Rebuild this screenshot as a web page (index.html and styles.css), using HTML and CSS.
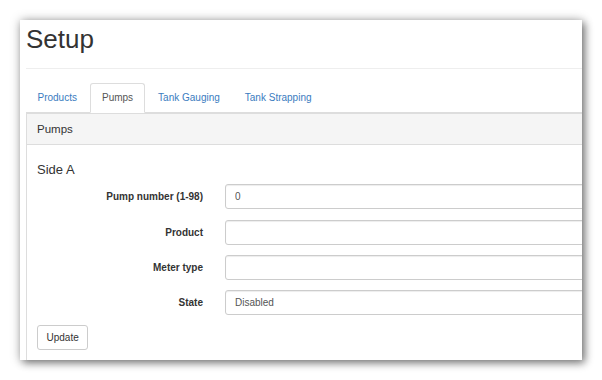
FILE: index.html
```html
<!DOCTYPE html>
<html lang="en">
<head>
  <meta charset="UTF-8">
  <title>Setup</title>
  <link rel="stylesheet" href="styles.css">
</head>
<body>

<div class="window">
  <div class="page">
    <h1 class="page-header">Setup</h1>

    <ul class="nav-tabs">
      <li><a href="#">Products</a></li>
      <li class="active"><a href="#">Pumps</a></li>
      <li><a href="#">Tank Gauging</a></li>
      <li><a href="#">Tank Strapping</a></li>
    </ul>

    <div class="panel">
      <div class="panel-heading">Pumps</div>
      <div class="panel-body">
        <h4>Side A</h4>
        <form class="form-horizontal">
          <div class="form-row">
            <label for="pump">Pump number (1-98)</label>
            <input type="text" id="pump" value="0">
          </div>
          <div class="form-row">
            <label for="product">Product</label>
            <input type="text" id="product">
          </div>
          <div class="form-row">
            <label for="meter">Meter type</label>
            <input type="text" id="meter">
          </div>
          <div class="form-row">
            <label for="state">State</label>
            <select id="state">
              <option>Disabled</option>
              <option>Enabled</option>
            </select>
          </div>
          <button type="button" class="btn-default">Update</button>
        </form>
      </div>
    </div>
  </div>
</div>

</body>
</html>
```

FILE: styles.css
```css
body {
  margin: 0;
  padding: 20px;
  background-color: #fff;
  font-family: 'Liberation Sans', Arial, Helvetica, sans-serif;
  font-size: 10px;
  color: #333;
}

.window {
  width: 562px;
  height: 340px;
  overflow: hidden;
  background-color: #fff;
  box-shadow: 3px 3px 8px rgba(0, 0, 0, 0.45), 0 0 10px rgba(0, 0, 0, 0.25);
}

.page {
  width: 900px;
  padding-left: 6px;
}

.page-header {
  margin: 0;
  padding: 5px 0 14px;
  font-size: 26px;
  font-weight: normal;
  line-height: 29px;
  border-bottom: 1px solid #eee;
}

/* Tabs */
.nav-tabs {
  list-style: none;
  margin: 14px 0 0;
  padding: 0;
  display: flex;
  border-bottom: 1px solid #ddd;
}

.nav-tabs li {
  margin-right: 2px;
  margin-bottom: -1px;
}

.nav-tabs a {
  display: block;
  padding: 7px 10.5px;
  line-height: 14px;
  color: #3a7cc0;
  text-decoration: none;
  border: 1px solid transparent;
  border-radius: 3px 3px 0 0;
}

.nav-tabs .active a {
  color: #555;
  background-color: #fff;
  border-color: #ddd #ddd transparent;
}

/* Panel */
.panel {
  border: 1px solid #ddd;
}

.panel-heading {
  padding: 8px 10px;
  line-height: 14px;
  font-size: 11.5px;
  background-color: #f5f5f5;
  border-bottom: 1px solid #ddd;
}

.panel-body {
  padding: 11px 10px;
}

h4 {
  margin: 7px 0;
  font-size: 13px;
  font-weight: normal;
  line-height: 1.1;
}

.form-row {
  display: grid;
  grid-template-columns: 166px 1fr;
  column-gap: 22px;
  align-items: center;
  margin-bottom: 10.3px;
}

label {
  text-align: right;
  font-weight: bold;
}

input, select {
  box-sizing: border-box;
  width: 100%;
  height: 25px;
  padding: 0 9px;
  border: 1px solid #ccc;
  border-radius: 3px;
  background-color: #fff;
  font-family: inherit;
  font-size: 10px;
  color: #555;
  box-shadow: inset 0 1px 1px rgba(0, 0, 0, 0.075);
  -webkit-appearance: none;
  appearance: none;
}

.btn-default {
  height: 25px;
  padding: 0 8.5px;
  border: 1px solid #ccc;
  border-radius: 3px;
  background-color: #fff;
  font-family: inherit;
  font-size: 10px;
  color: #333;
  cursor: pointer;
}
```
